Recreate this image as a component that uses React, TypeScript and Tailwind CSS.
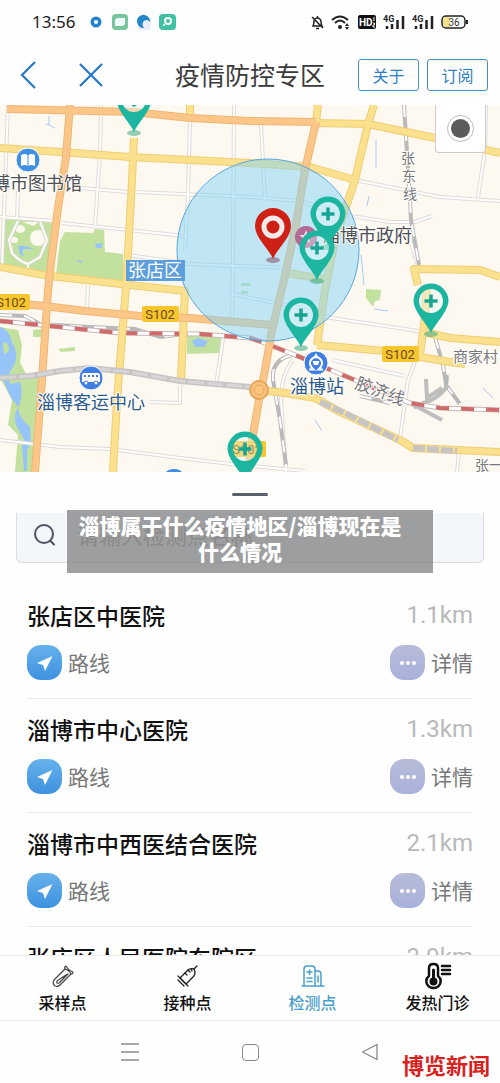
/**
 * Epidemic prevention zone: map of nearby testing points with a hospital list below.
 */
import type { ReactNode } from "react";

type Site = { name: string; distance: string };

const SITES: Site[] = [
  { name: "张店区中医院", distance: "1.1km" },
  { name: "淄博市中心医院", distance: "1.3km" },
  { name: "淄博市中西医结合医院", distance: "2.1km" },
  { name: "张店区人民医院东院区", distance: "3.9km" },
];

// Map geometry, all in the map's own coordinate space
const MINOR_ROADS = [
  "M8 105 L2 267",
  "M18 190 L17 218",
  "M101 105 L100 155 L95 225",
  "M0 217 L55 221 M62 223 L185 236",
  "M80 188 L128 192 M136 192 L250 197 L300 201 L345 215",
  "M190 120 L188 195 L185 250",
  "M234 105 L233 250 L232 325",
  "M128 255 L190 264 L290 268",
  "M261 124 L265 200",
  "M355 180 L410 191 L440 197 L500 201",
  "M486 105 L485 150 L478 197",
  "M345 215 L390 222 L415 222 L432 216",
  "M410 240 L418 266",
  "M88 285 L87 308",
  "M224 332 L216 385",
  "M180 385 L180 403 L150 402",
  "M0 440 L60 447 L110 449 L180 458 L240 465 L305 471",
  "M232 294 L300 308 L325 317 L425 332",
  "M332 360 L405 376",
  "M415 362 L408 380 L400 438",
  "M293 360 Q281 375 281 400 L286 472",
  "M459 452 L457 472",
];

const YELLOW_ROADS = [
  "M0 148 L60 152 L130 157 L250 163 L310 167 L355 180",
  "M134 138 L131 200 L127 270 L125 300 L117 400 L113 472",
  "M0 267 L50 276 L130 285 L185 291 L181 380",
  "M190 105 V117 M318 105 L316 122",
  "M374 105 L368 124 L355 180 L335 240 L325 290 L317 345",
  "M313 123 L368 124 L435 138 L500 153",
  "M317 345 L385 351 L450 362 L465 364",
  "M418 285 L414 269 L480 270 L500 277",
  "M427 285 L424 325 L420 355",
  "M424 332 L450 338 L500 342",
  "M259 390 L285 393 L315 398 L340 412 L400 440 L413 448 L500 452",
  "M286 273 L325 279",
];

const ORANGE_ROADS = [
  "M7 109 L133 112 L190 118 L250 121 L316 122",
  "M70 105 L66 157 L58 208 L52 255 L48 290 L42 380 L35 472",
  "M316 122 L305 170 L295 230 L284 280 L272 330 L265 370 L259 400 L252 440 L248 472",
  "M0 302 L45 306 L85 311 L140 316 L190 318 L272 325",
];

const GREY_HIGHWAY = "M0 378 L30 376 L60 371 L90 368 L130 372 L180 381 L250 387";
const GREY_RAMP = "M320 402 L345 413 L398 440 M413 448 L457 451";
const RED_RAIL = "M0 321 L50 326 L120 333 L200 334 L250 338 L262 342 L295 355 L350 378 L410 403 L440 408 L500 410";
const GREY_RAIL = [
  "M0 315 L25 316 L40 324 L90 327 L135 329 L160 337 L185 334",
  "M404 105 L410 200 L411 220 L419 265",
  "M435 337 L443 365 L446 385 L460 404",
  "M292 355 Q271 360 273 380 L280 420 L286 465",
  "M360 396 L390 403",
];

const ROAD_BADGES = [
  { x: 11, y: 302, label: "S102" },
  { x: 160, y: 314, label: "S102" },
  { x: 400, y: 354, label: "S102" },
  { x: 247, y: 449, label: "S102" },
];

const TEST_PINS = [
  { x: 134, y: 132 },
  { x: 328, y: 246 },
  { x: 317, y: 280 },
  { x: 301, y: 347 },
  { x: 431, y: 333 },
  { x: 245, y: 481 },
];

function Roads({ paths, color, edge, width }: { paths: string[]; color: string; edge: string; width: number }) {
  const d = paths.join(" ");
  return (
    <g fill="none" strokeLinejoin="round">
      <path d={d} stroke={edge} strokeWidth={width} />
      <path d={d} stroke={color} strokeWidth={width - 2} />
    </g>
  );
}

function TestPin({ x, y }: { x: number; y: number }) {
  return (
    <g transform={`translate(${x} ${y})`}>
      <ellipse cx="0" cy="1" rx="7" ry="3" fill="#3cab80" opacity="0.55" />
      <circle cx="0" cy="-32" r="12" fill="#e4f8fa" opacity="0.4" />
      <path
        d="M0 0 C-3 -8 -17 -21 -17.500 -32 A17.500 17.500 0 0 1 17.500 -32 C17 -21 3 -8 0 0Z M0 -44 A12 12 0 1 0 0 -20 A12 12 0 1 0 0 -44Z"
        fill="#1bb5a0"
        fillRule="evenodd"
      />
      <path d="M-6.500 -32 H6.500 M0 -38.500 V-25.500" stroke="#17a594" strokeWidth="3.500" />
    </g>
  );
}

function CityMap() {
  return (
    <svg
      viewBox="0 105 500 367"
      preserveAspectRatio="xMidYMid slice"
      className="block h-full w-full"
      role="img"
      aria-label="淄博地图"
    >
      <rect x="0" y="105" width="500" height="367" fill="#fdf9f1" />

      {/* Parks and water */}
      <g fill="#c3e19e">
        <path d="M3 219 L54 222 L50 274 L0 266Z" />
        <path d="M60 241 L65 232 L93 233 L95 229 L104 230 L105 252 L123 254 L123 282 L56 274Z" />
        <path d="M187 336 L223 335 L219 353 L187 354Z" />
        <path d="M0 327 L18 330 L22 345 L20 362 L27 376 L39 376 L34 472 L15 472 L18 435 L8 425 L12 400 L0 378Z" />
        <path d="M33 330 L42 329 L41 337 L33 337Z M58 349 L75 347 V351 L61 352Z" />
        <path d="M366 289 L381 290 L380 300 L375 301 L373 307 L366 298Z" />
        <path d="M242 283 H250 V286 H241Z M241 291 H248 V294 H241Z" />
      </g>
      <g fill="#96c4f8">
        <path d="M0 327 Q9 329 12 342 Q20 356 13 367 Q7 374 10 384 L20 382 Q24 395 18 408 Q19 418 30 427 L31 443 L27 450 L27 471 L24 471 L22 445 L24 439 L17 427 Q12 418 18 407 Q10 398 5 384 L0 375Z" />
        <path d="M192 341 L198 338 L208 341 L204 347 L195 347Z" />
        <path d="M95 244 L102 243 L102 248 L96 248Z M77 260 L83 261 L80 263Z" />
        <path d="M18 246 Q25 245 34 249 L25 249 Q20 250 24 256 L20 255Z" />
      </g>
      <path d="M3 343 Q7 341 9 348 Q9 353 4 354Z" fill="#c3e19e" />
      <g fill="#fdf9f1">
        <circle cx="38" cy="238" r="8" />
        <ellipse cx="20" cy="229" rx="5" ry="4" />
        <ellipse cx="14" cy="240" rx="4" ry="3" />
        <path d="M22 222 H38 L34 226Z" />
      </g>
      <path d="M18 221 L9 240 L12 253 Q20 262 28 264 L40 257 L47 240 L40 221" fill="none" stroke="#d5d8cf" strokeWidth="4" />
      <path d="M18 221 L9 240 L12 253 Q20 262 28 264 L40 257 L47 240 L40 221 M28 264 V270" fill="none" stroke="#fffdf8" strokeWidth="2" />
      <path d="M49 116 L49 125 L55 128 M46 124 L49 125 M376 140 V168 M369 196 L367 206 M361 255 L364 285 M315 420 L322 431 M374 309 L388 311 M483 388 L493 398" fill="none" stroke="#a9cbf2" strokeWidth="1" />

      <Roads paths={MINOR_ROADS} color="#fffefb" edge="#dedbd9" width={4} />

      {/* Railways */}
      <g fill="none">
        <path d={GREY_RAIL.join(" ")} stroke="#b9b9b9" strokeWidth="4" />
        <path d={GREY_RAIL.join(" ")} stroke="#ffffff" strokeWidth="2" strokeDasharray="12 12" />
        <path d="M447 375 Q449 392 433 399 L414 408" stroke="#b5b5b5" strokeWidth="3" />
        <path d="M426 379 L427 398 L442 388 M448 386 Q434 402 422 403" stroke="#bdbdbd" strokeWidth="4" />
        <path d="M412 404 L442 420" stroke="#bdbdbd" strokeWidth="4" />
        <path d={RED_RAIL} stroke="#c9b5b5" strokeWidth="5" />
        <path d={RED_RAIL} stroke="#ffffff" strokeWidth="3" />
        <path d={RED_RAIL} stroke="#cf6b6b" strokeWidth="4" strokeDasharray="13 12" />
      </g>

      <Roads paths={YELLOW_ROADS} color="#fbe08e" edge="#efcd74" width={8} />
      <Roads paths={ORANGE_ROADS} color="#fbc688" edge="#efb676" width={8} />
      <path d={GREY_HIGHWAY} fill="none" stroke="#c6c4c4" strokeWidth="6" />
      <path d={GREY_HIGHWAY} fill="none" stroke="#d8d6d4" strokeWidth="3" strokeDasharray="16 3" />
      <path d={GREY_RAMP} fill="none" stroke="#c6c4c4" strokeWidth="6" strokeDasharray="12 2" />
      <circle cx="259" cy="390" r="9" fill="#fbc37f" stroke="#e7a55a" strokeWidth="2" />
      <circle cx="259" cy="390" r="5" fill="none" stroke="#e7a55a" />

      {/* Search radius */}
      <circle cx="268" cy="250" r="91" fill="#84d4f6" fillOpacity="0.5" stroke="#5ba5dc" strokeWidth="1" />

      {/* Place icons */}
      <g stroke="#fff" strokeWidth="1">
        <circle cx="28" cy="160" r="12" fill="#3f8fe4" />
        <circle cx="91" cy="378" r="12" fill="#3f7fe4" />
        <circle cx="316" cy="363" r="12" fill="#3f7fe4" />
      </g>
      <circle cx="306" cy="237" r="11" fill="#b06a94" />
      <path d="M21 155 Q25 153 27.500 155 V166 Q25 164 21 166Z M35 155 Q31 153 28.500 155 V166 Q31 164 35 166Z" fill="#fff" />
      <path d="M84 373 H98 Q100 373 100 376 V382 H82 V376 Q82 373 84 373Z" fill="#fff" />
      <path d="M84 376 H99" stroke="#3f7fe4" strokeWidth="2" strokeDasharray="2 2" />
      <g fill="#fff" stroke="#3f7fe4">
        <circle cx="86" cy="383" r="2" />
        <circle cx="96" cy="383" r="2" />
      </g>
      <path d="M309 369.500 H313.500 Q309.500 366 310 362 Q311 358 316 357 Q321 358 322 362 Q322.500 366 318.500 369.500 H323" fill="none" stroke="#fff" strokeWidth="2" />
      <path d="M312 358 Q315 356 316 353 Q317 356 320 358Z M312.500 361 H319.500 L318 365 H314Z" fill="#fff" />
      <path d="M306 230 L308 235 H313 L309 238 L310 243 L306 240 L302 243 L303 238 L299 235 H304Z" fill="#f3dbe8" />
      <path d="M166 473 a8 4 0 0 1 16 0Z" fill="#3f8fe4" />

      {/* Labels */}
      <rect x="126" y="260" width="59" height="21" fill="#5d9fdc" />
      <g fontFamily="'Noto Sans CJK SC', sans-serif" paintOrder="stroke" strokeLinejoin="round">
        <text x="155" y="277" fontSize="18" fill="#fff" textAnchor="middle">张店区</text>
        <g fill="#4c5158" stroke="#fffdf8" strokeWidth="2">
          <text x="82" y="190" fontSize="18" textAnchor="end">淄博市图书馆</text>
          <text x="322" y="242" fontSize="18">淄博市政府</text>
        </g>
        <g fill="#77797f" stroke="#fffdf8" strokeWidth="2" fontSize="14">
          <text x="401" y="163">张</text>
          <text x="402" y="181">东</text>
          <text x="403" y="199">线</text>
          <text x="453" y="362" fontSize="15">商家村</text>
          <text x="475" y="470">张一路</text>
          <text x="354" y="388" fontSize="17" transform="rotate(20 354 388)">胶济线</text>
        </g>
        <g fill="#2a5b8f" stroke="#fffdf8" strokeWidth="2" fontSize="18">
          <text x="91" y="409" textAnchor="middle">淄博客运中心</text>
          <text x="317" y="393" textAnchor="middle">淄博站</text>
        </g>
      </g>
      {ROAD_BADGES.map((b) => (
        <g key={`${b.x}-${b.y}`}>
          <rect x={b.x - 18} y={b.y - 8} width="37" height="16" rx="2" fill="#f7c52e" />
          <text x={b.x} y={b.y + 5} fontSize="13" fontFamily="Roboto, sans-serif" fill="#6b4a12" textAnchor="middle">
            {b.label}
          </text>
        </g>
      ))}

      {TEST_PINS.map((p) => (
        <TestPin key={`${p.x}-${p.y}`} x={p.x} y={p.y} />
      ))}

      {/* Current position */}
      <ellipse cx="273" cy="260" rx="7" ry="3" fill="#8f6f86" opacity="0.7" />
      <path d="M273 259 C270 250 255 238 255 226 A18 18 0 0 1 291 226 C291 238 276 250 273 259Z" fill="#cf2016" />
      <circle cx="273" cy="227" r="9" fill="#cf2016" stroke="#f6ebe8" strokeWidth="5" />
    </svg>
  );
}

function SignalIcon() {
  return (
    <svg width="22" height="15" viewBox="0 0 22 15" aria-hidden="true">
      <text x="0" y="7" fontSize="9" fontWeight="700" fontFamily="Roboto, sans-serif" fill="#222">4G</text>
      <path d="M4 14 V11 M9 14 V9 M14.500 14 V5 M20 14 V1" stroke="#222" strokeWidth="2.500" />
    </svg>
  );
}

function StatusBar() {
  return (
    <div className="flex h-11 shrink-0 items-center justify-between px-8">
      <div className="flex items-center gap-3">
        <span className="font-['Noto_Sans',sans-serif] text-[17px] text-[#222]">13:56</span>
        <svg width="90" height="18" viewBox="0 0 90 18" aria-hidden="true">
          <circle cx="9" cy="9" r="5.500" fill="#2585d0" />
          <circle cx="9" cy="9" r="2" fill="#fff" />
          <rect x="25" y="1" width="16" height="16" rx="4" fill="#77c59f" />
          <path d="M30 5 H38 V11 L36 13 H28 V7Z" fill="#f2faf5" />
          <rect x="51" y="4" width="13" height="13" rx="3" fill="#e9eef7" />
          <path d="M52 13 A6.500 6.500 0 1 1 63 9 Q60 5.500 57 8 Q54 11 57 15 Q53 15 52 13Z" fill="#2585c9" />
          <rect x="72" y="1" width="17" height="16" rx="4" fill="#3fc1a2" />
          <circle cx="81" cy="8" r="3" fill="none" stroke="#fff" strokeWidth="2" />
          <circle cx="77" cy="12" r="1" fill="#fff" />
        </svg>
      </div>
      <div className="flex items-center gap-[7px]">
        <svg width="13" height="15" viewBox="0 0 13 15" fill="none" stroke="#222" strokeWidth="1.500" aria-hidden="true">
          <path d="M2 11 Q3 9 3 6 Q4 3 6.500 3 Q9 3 10 6 Q10 9 11 11Z M6.500 1 V3 M5 13.500 H8 M1 2 L12 13" />
        </svg>
        <svg width="20" height="15" viewBox="0 0 20 15" fill="none" stroke="#222" strokeWidth="2" aria-hidden="true">
          <path d="M1 5 Q9 -2 17 5 M4 8 Q9 3 14 8" />
          <circle cx="9" cy="12" r="2" fill="#222" stroke="none" />
          <path d="M14 11 L16 8 L18 11Z M14 12 L16 15 L18 12Z" fill="#222" stroke="none" />
        </svg>
        <svg width="18" height="14" viewBox="0 0 18 14" aria-hidden="true">
          <rect width="18" height="14" rx="2" fill="#111" />
          <text x="1" y="11" fontSize="10" fontWeight="700" fontFamily="Roboto, sans-serif" fill="#fff">HD</text>
          <path d="M16 2 V6 M15 8 H16.500 V10 H15 V12 H17" stroke="#fff" fill="none" />
        </svg>
        <SignalIcon />
        <SignalIcon />
        <svg width="27" height="14" viewBox="0 0 27 14" aria-hidden="true">
          <rect x="1" y="1" width="23" height="12" rx="4" fill="#fff" stroke="#222" strokeWidth="1.500" />
          <path d="M5 2 H9 V12 H5 Q2 12 2 9 V5 Q2 2 5 2Z" fill="#f6e08a" />
          <path d="M26 5 V9" stroke="#222" strokeWidth="2" />
          <text x="13" y="11" fontSize="10" fontFamily="Roboto, sans-serif" fill="#333" textAnchor="middle">36</text>
        </svg>
      </div>
    </div>
  );
}

function Header() {
  return (
    <header className="relative flex h-[61px] shrink-0 items-center justify-between pr-3 pl-5">
      <div className="flex items-center gap-10">
        <button type="button" aria-label="返回">
          <svg width="18" height="28" viewBox="0 0 18 28" fill="none" stroke="#2876c8" strokeWidth="2.200">
            <path d="M15 1 L2 14 L15 27" />
          </svg>
        </button>
        <button type="button" aria-label="关闭">
          <svg width="26" height="26" viewBox="0 0 26 26" fill="none" stroke="#2876c8" strokeWidth="2.200">
            <path d="M2 2 L24 24 M24 2 L2 24" />
          </svg>
        </button>
      </div>
      <h1 className="absolute left-1/2 -translate-x-1/2 text-[25px] whitespace-nowrap text-[#3a3a3a]">疫情防控专区</h1>
      <div className="flex gap-2">
        {["关于", "订阅"].map((label) => (
          <button key={label} type="button" className="h-8 w-[61px] rounded-[3px] border border-[#4a8fc4] text-base text-[#2f80c0]">
            {label}
          </button>
        ))}
      </div>
    </header>
  );
}

function SiteRow({ site }: { site: Site }) {
  return (
    <li className="h-[114px] border-b border-[#e8e8e8]">
      <div className="flex h-[60px] items-center justify-between">
        <h2 className="text-[23px] font-medium text-[#111]">{site.name}</h2>
        <span className="font-[Roboto,sans-serif] text-2xl text-[#b9b9b9]">{site.distance}</span>
      </div>
      <div className="flex items-center justify-between text-[21px] leading-[35px] text-[#777]">
        <button type="button" className="flex items-center gap-1.5">
          <span className="flex size-[35px] items-center justify-center rounded-[14px] bg-linear-to-b from-[#67b2ec] to-[#3d91df]">
            <svg width="18" height="18" viewBox="0 0 18 18" fill="#fff" aria-hidden="true">
              <path d="M16.500 2 L1 9 L7 11 L9 17Z" />
            </svg>
          </span>
          路线
        </button>
        <button type="button" className="flex items-center gap-1.5">
          <span className="flex size-[35px] items-center justify-center gap-[2px] rounded-[14px] bg-linear-to-b from-[#b8bcd8] to-[#a8b1dc]">
            <i className="size-1 rounded-full bg-white" />
            <i className="size-1 rounded-full bg-white" />
            <i className="size-1 rounded-full bg-white" />
          </span>
          详情
        </button>
      </div>
    </li>
  );
}

function TabItem({ label, active, children }: { label: string; active?: boolean; children: ReactNode }) {
  return (
    <button type="button" className={active ? "flex flex-col items-center text-[#4a9fca]" : "flex flex-col items-center text-[#111]"}>
      <svg width="28" height="28" viewBox="0 0 28 28" fill="none" stroke="currentColor" strokeWidth="1.500" strokeLinecap="round" strokeLinejoin="round" aria-hidden="true">
        {children}
      </svg>
      <span className="text-base leading-6 font-medium">{label}</span>
    </button>
  );
}

function TabBar() {
  return (
    <nav className="grid h-[66px] shrink-0 grid-cols-4 border-y border-[#ededed] pt-1.5">
      <TabItem label="采样点">
        <g strokeWidth="1.200" stroke="#444">
          <path d="M16 7 L5 18 Q3 22 6 24 Q9 25 11 23 L22 12" />
          <path d="M17 4 Q15 5 16 7 Q20 8 22 12 Q24 12 24 10 Q20 9 17 4Z" />
          <path d="M19 12 L10 21 Q7 22 8 19 L17 13Z" />
        </g>
      </TabItem>
      <TabItem label="接种点">
        <g strokeWidth="1.300" stroke="#222">
          <path d="M6 16 L14 8 Q16 6 20 7 Q22 10 20 14 L12 22Z" />
          <path d="M20 7 L23 4 M4 14 L14 24 M4 18 L10 24 M11 11 L13 13 M14 8 L16 10 M17 7 L18 9" />
        </g>
      </TabItem>
      <TabItem label="检测点" active>
        <path d="M5 24 V7 Q5 4 8 4 H13 Q16 4 16 7 V24 M16 9 H19 Q22 9 22 12 V24 M3 24 H25 M19 14 V20 M8 10 H13 M10.500 8 V12.500 M8 16 H13 M8 19.500 H13" />
      </TabItem>
      <TabItem label="发热门诊">
        <path d="M5 14 V6 Q5 2 9.500 2 Q14 2 14 6 V14 Q18 17 16 22 Q14 26 9.500 26 Q5 26 3 22 Q1 17 5 14Z" strokeWidth="2.500" />
        <circle cx="9.500" cy="19.500" r="4" fill="currentColor" stroke="none" />
        <path d="M9.500 8 V17" strokeWidth="3" />
        <path d="M18 4 H26 M18 8 H26 M18 12 H26" strokeWidth="2.500" />
      </TabItem>
    </nav>
  );
}

function SystemNav() {
  return (
    <div className="relative grid h-[62px] shrink-0 grid-cols-3 place-items-center px-[70px]">
      <button type="button" aria-label="菜单">
        <svg width="18" height="18" viewBox="0 0 18 18" stroke="#8a8a8a" strokeWidth="1.500">
          <path d="M0 1 H18 M0 9 H18 M0 17 H18" />
        </svg>
      </button>
      <button type="button" aria-label="主页" className="size-[17px] rounded-[4px] border border-[#888]" />
      <button type="button" aria-label="后退">
        <svg width="18" height="18" viewBox="0 0 18 18" fill="none" stroke="#888" strokeWidth="1.300" strokeLinejoin="round">
          <path d="M16 1.500 V16.500 L1.500 9Z" />
        </svg>
      </button>
      <span className="absolute right-2.5 bottom-0.5 font-['Liberation_Serif','Noto_Sans_CJK_SC',serif] text-[22px] leading-7 font-bold text-[#d8201c]">
        博览新闻
      </span>
    </div>
  );
}

export default function App() {
  return (
    <div className="flex h-screen flex-col overflow-hidden bg-[#fefefe] font-['Noto_Sans_CJK_SC',sans-serif]">
      <StatusBar />
      <Header />

      <section className="relative h-[367px] shrink-0 overflow-hidden">
        <CityMap />
        <button
          type="button"
          aria-label="定位"
          className="absolute top-0 right-3.5 flex h-12 w-[51px] items-center justify-center rounded-b-[4px] border border-t-0 border-[#ccc] bg-white"
        >
          <span className="flex size-[27px] items-center justify-center rounded-full border border-[#bbb]">
            <span className="size-[19px] rounded-full bg-[#5b5b5b]" />
          </span>
        </button>
      </section>

      <main className="relative flex min-h-0 flex-1 flex-col">
        <div className="flex h-[41px] shrink-0 items-center justify-center pt-1">
          <span className="h-[3px] w-9 rounded-full bg-[#5c5f6d]" />
        </div>
        <label className="mx-4 flex h-[50px] shrink-0 items-center gap-5 rounded-b-md border border-t-0 border-[#dadcde] bg-[#f4f7f9] pb-1.5 pl-4">
          <svg width="24" height="24" viewBox="0 0 24 24" fill="none" stroke="#4b5262" strokeWidth="2" strokeLinecap="round" aria-hidden="true">
            <circle cx="11" cy="11" r="9" />
            <path d="M17.500 18 L21 21.500" />
          </svg>
          <input
            type="search"
            aria-label="搜索检测点"
            placeholder="请输入检测点名称"
            className="min-w-0 flex-1 bg-transparent text-[22px] outline-none placeholder:text-[#a5a7aa]"
          />
        </label>
        <ul className="mx-[27px] mt-[22px] min-h-0 flex-1 overflow-hidden">
          {SITES.map((site) => (
            <SiteRow key={site.name} site={site} />
          ))}
        </ul>

        {/* Caption over the search field */}
        <p className="absolute inset-x-[67px] top-[38px] h-[63px] bg-[#808080]/75 pt-0.5 pr-5 text-center text-[21px] leading-[26px] font-black text-white">
          淄博属于什么疫情地区/淄博现在是
          <br />
          什么情况
        </p>
      </main>

      <TabBar />
      <SystemNav />
    </div>
  );
}
